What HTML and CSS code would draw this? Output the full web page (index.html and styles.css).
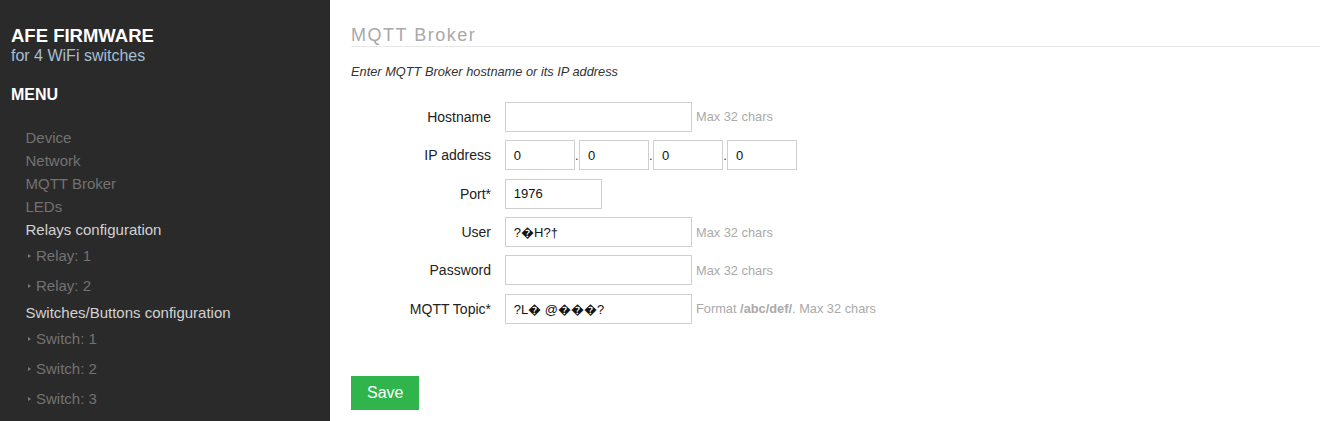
FILE: index.html
```html
<!DOCTYPE html>
<html>
<head>
<meta charset="utf-8">
<title>AFE Firmware</title>
<link rel="stylesheet" href="styles.css">
</head>
<body>
<div class="layout">
  <aside class="sidebar">
    <div class="brand">
      <div class="brand-title">AFE FIRMWARE</div>
      <div class="brand-sub">for 4 WiFi switches</div>
    </div>
    <div class="menu-title">MENU</div>
    <ul class="menu">
      <li class="menu-item">Device</li>
      <li class="menu-item">Network</li>
      <li class="menu-item">MQTT Broker</li>
      <li class="menu-item">LEDs</li>
      <li class="menu-head">Relays configuration</li>
      <li class="menu-sub"><span class="tri"></span>Relay: 1</li>
      <li class="menu-sub"><span class="tri"></span>Relay: 2</li>
      <li class="menu-head">Switches/Buttons configuration</li>
      <li class="menu-sub"><span class="tri"></span>Switch: 1</li>
      <li class="menu-sub"><span class="tri"></span>Switch: 2</li>
      <li class="menu-sub"><span class="tri"></span>Switch: 3</li>
    </ul>
  </aside>
  <main class="content">
    <h2 class="section-title">MQTT Broker</h2>
    <p class="section-desc">Enter MQTT Broker hostname or its IP address</p>
    <form class="form">
      <div class="row">
        <label class="label">Hostname</label>
        <input class="field field-wide" type="text" value="">
        <span class="hint">Max 32 chars</span>
      </div>
      <div class="row">
        <label class="label">IP address</label>
        <div class="ip">
          <input class="field field-ip" type="text" value="0"><span class="dot">.</span><input class="field field-ip" type="text" value="0"><span class="dot">.</span><input class="field field-ip" type="text" value="0"><span class="dot">.</span><input class="field field-ip" type="text" value="0">
        </div>
      </div>
      <div class="row">
        <label class="label">Port*</label>
        <input class="field field-port" type="text" value="1976">
      </div>
      <div class="row">
        <label class="label">User</label>
        <input class="field field-wide" type="text" value="?&#xFFFD;H?&#x2020;">
        <span class="hint">Max 32 chars</span>
      </div>
      <div class="row">
        <label class="label">Password</label>
        <input class="field field-wide" type="password" value="">
        <span class="hint">Max 32 chars</span>
      </div>
      <div class="row">
        <label class="label">MQTT Topic*</label>
        <input class="field field-wide" type="text" value="?L&#xFFFD; @&#xFFFD;&#xFFFD;&#xFFFD;?">
        <span class="hint">Format <b>/abc/def/</b>. Max 32 chars</span>
      </div>
      <button class="btn-save" type="button">Save</button>
    </form>
  </main>
</div>
</body>
</html>
```

FILE: styles.css
```css
html, body {
  margin: 0;
  padding: 0;
}
body {
  font-family: "Liberation Sans", Arial, sans-serif;
  background: #fff;
  color: #333;
}
.layout {
  display: flex;
  height: 100vh;
  overflow: hidden;
}
.sidebar {
  width: 330px;
  flex: none;
  background: #2a2a2a;
  padding: 26px 0 0 11px;
  box-sizing: border-box;
}
.brand-title {
  font-size: 18.5px;
  line-height: 20px;
  font-weight: bold;
  color: #fff;
}
.brand-sub {
  font-size: 16px;
  line-height: 19px;
  color: #a6bfd3;
}
.menu-title {
  margin-top: 20px;
  font-size: 16px;
  line-height: 20px;
  font-weight: bold;
  color: #fff;
}
.menu {
  list-style: none;
  margin: 20.5px 0 0;
  padding: 0 0 0 14.5px;
  font-size: 15px;
}
.menu-item {
  line-height: 23px;
  color: #727272;
}
.menu-head {
  line-height: 23px;
  color: #d2d2d2;
}
.menu-sub {
  line-height: 30px;
  color: #727272;
  padding-left: 2.5px;
  display: flex;
  align-items: center;
}
.tri {
  width: 0;
  height: 0;
  border-top: 2.5px solid transparent;
  border-bottom: 2.5px solid transparent;
  border-left: 3px solid #7a7a7a;
  margin: 1px 5px 0 0;
}
.content {
  flex: 1;
  padding-left: 21px;
  min-width: 0;
}
.section-title {
  margin: 25px 0 0;
  font-size: 18px;
  line-height: 21px;
  font-weight: normal;
  letter-spacing: 1.5px;
  color: #a9a9a9;
  border-bottom: 1px solid #e8e8e8;
}
.section-desc {
  margin: 16.5px 0 0;
  font-size: 12.8px;
  line-height: 16px;
  font-style: italic;
  color: #333;
}
.form {
  margin-top: 22.4px;
}
.row {
  display: flex;
  align-items: center;
  height: 30px;
  margin-bottom: 8.4px;
}
.label {
  width: 140px;
  margin-right: 14px;
  text-align: right;
  font-size: 14px;
  line-height: 16px;
  color: #222;
}
.field {
  box-sizing: border-box;
  height: 30px;
  border: 1px solid #cfcfcf;
  border-radius: 0;
  padding: 0 7.8px;
  font-family: "Liberation Sans", Arial, sans-serif;
  font-size: 13px;
  color: #111;
  background: #fff;
  outline: none;
  margin: 0;
}
.field-wide {
  width: 187px;
}
.field-port {
  width: 96.5px;
}
.field-ip {
  width: 69.5px;
}
.ip {
  display: flex;
  align-items: baseline;
}
.dot {
  width: 4.6px;
  text-align: center;
  font-size: 13px;
  color: #333;
}
.hint {
  margin-left: 4px;
  font-size: 12.8px;
  color: #aaa;
}
.hint b {
  font-weight: bold;
}
.btn-save {
  margin-top: 43.5px;
  background: #30b44c;
  color: #fff;
  border: none;
  border-radius: 0;
  font-family: "Liberation Sans", Arial, sans-serif;
  font-size: 16px;
  line-height: 18px;
  padding: 8px 16px;
  cursor: pointer;
}
```
